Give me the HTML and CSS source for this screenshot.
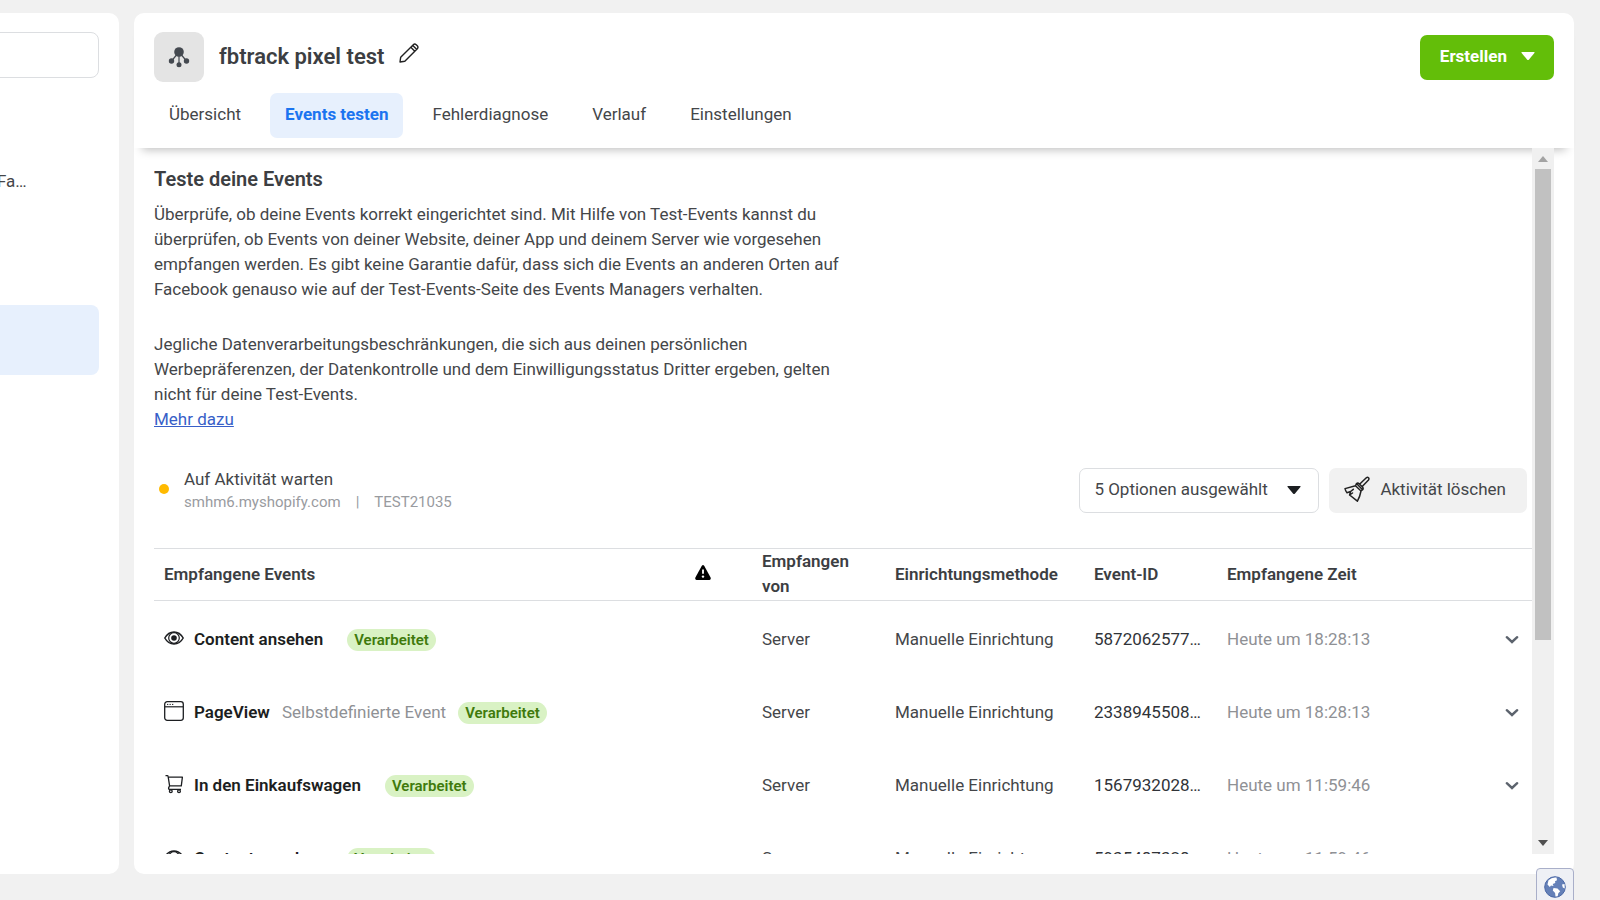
FILE: index.html
```html
<!DOCTYPE html>
<html lang="de">
<head>
<meta charset="utf-8">
<meta name="viewport" content="width=device-width, initial-scale=1">
<title>Events Manager</title>
<link rel="stylesheet" href="styles.css">
</head>
<body>
<svg class="sprite" aria-hidden="true">
  <symbol id="eye" viewBox="0 0 20 20"><path d="M.8 10C3 6 6.200 3.900 10 3.900S17 6 19.200 10C17 14 13.800 16.100 10 16.100S3 14 .8 10z" fill="none" stroke="currentColor" stroke-width="1.500"/><circle cx="10" cy="10" r="5.300" fill="none" stroke="currentColor" stroke-width="1.200"/><circle cx="10" cy="10" r="2.800" fill="currentColor"/></symbol>
  <symbol id="window" viewBox="0 0 20 20"><rect x=".7" y=".7" width="18.600" height="18.600" rx="2.500" fill="none" stroke="currentColor" stroke-width="1.300"/><path d="M1 5.800h18" stroke="currentColor" stroke-width="1.200"/><path d="M3 3.400h1.300M5.500 3.400h1.300M8 3.400h1.300" stroke="currentColor" stroke-width="1"/></symbol>
  <symbol id="cart" viewBox="0 0 20 20"><path d="M1.500 1.600H3.200Q4 1.600 4.100 2.400L5.600 11.800M3.800 3.200H18.400L17.300 11.800H5.600L4.600 13.900Q4.400 15.400 5.800 15.400H17" fill="none" stroke="currentColor" stroke-width="1.300" stroke-linejoin="round"/><circle cx="6.800" cy="17.200" r="1.400" fill="none" stroke="currentColor" stroke-width="1.300"/><circle cx="15" cy="17.200" r="1.400" fill="none" stroke="currentColor" stroke-width="1.300"/></symbol>
  <symbol id="chevron" viewBox="0 0 14 10"><path d="M1.800 2.200 7 7l5.200-4.800" fill="none" stroke="currentColor" stroke-width="2.400" stroke-linecap="round"/></symbol>
  <symbol id="caret" viewBox="0 0 14 8"><path d="M1 0h12q1 0 .4.900L8 7.400q-1 1-2 0L.6.900Q0 0 1 0z" fill="currentColor"/></symbol>
</svg>
<div class="app">
  <aside class="sidebar">
    <input class="side-search" type="text" aria-label="Suchen">
    <div class="side-label">Fa…</div>
    <a class="side-item" href="#" aria-label="Datenquelle"></a>
  </aside>
  <main class="panel">
    <header class="head">
      <div class="title-row">
        <div class="source-icon">
          <svg width="22" height="22" viewBox="0 0 22 22" fill="#444950" stroke="#444950"><path d="M11 6 3.500 15M11 6v13M11 6l7.500 9" stroke-width="1.200"/><circle cx="11" cy="6" r="4.800" stroke="none"/><circle cx="3.500" cy="15" r="2.700" stroke="none"/><circle cx="11" cy="18.700" r="2.500" stroke="none"/><circle cx="18.500" cy="15" r="2.700" stroke="none"/></svg>
        </div>
        <h1 class="title">fbtrack pixel test</h1>
        <button class="edit" aria-label="Bearbeiten"><svg width="20" height="20" viewBox="0 0 20 20" fill="none" stroke="#222" stroke-width="1.400" stroke-linejoin="round"><path d="M1 19 1.700 14.200 14.300 1.700Q15.700.4 17.200 1.700L18.300 2.800Q19.600 4.300 18.300 5.700L5.800 18.300zM11.800 4.200l4 4M13.800 2.400l3.800 3.800"/></svg></button>
        <button class="create">Erstellen <svg width="14" height="8"><use href="#caret"/></svg></button>
      </div>
      <nav class="tabs">
        <a class="tab" href="#">Übersicht</a>
        <a class="tab active" href="#" aria-current="page">Events testen</a>
        <a class="tab" href="#">Fehlerdiagnose</a>
        <a class="tab" href="#">Verlauf</a>
        <a class="tab" href="#">Einstellungen</a>
      </nav>
    </header>
    <div class="body">
      <div class="content">
        <section class="intro">
          <h2 class="heading">Teste deine Events</h2>
          <p class="text">Überprüfe, ob deine Events korrekt eingerichtet sind. Mit Hilfe von Test-Events kannst du<br>überprüfen, ob Events von deiner Website, deiner App und deinem Server wie vorgesehen<br>empfangen werden. Es gibt keine Garantie dafür, dass sich die Events an anderen Orten auf<br>Facebook genauso wie auf der Test-Events-Seite des Events Managers verhalten.</p>
          <p class="text">Jegliche Datenverarbeitungsbeschränkungen, die sich aus deinen persönlichen<br>Werbepräferenzen, der Datenkontrolle und dem Einwilligungsstatus Dritter ergeben, gelten<br>nicht für deine Test-Events.<br><a class="more" href="#">Mehr dazu</a></p>
        </section>
        <section class="status">
          <span class="dot"></span>
          <div class="state">
            <div>Auf Aktivität warten</div>
            <div class="meta"><span>smhm6.myshopify.com</span><span>|</span><span>TEST21035</span></div>
          </div>
          <div class="picker">
            <select class="select" aria-label="Optionen"><option>5 Optionen ausgewählt</option></select>
            <svg class="picker-caret" width="14" height="8"><use href="#caret"/></svg>
          </div>
          <button class="clear"><svg width="26" height="26" viewBox="0 0 26 26" fill="none" stroke="#222" stroke-width="1.500" stroke-linejoin="round" stroke-linecap="round"><path d="M15.800 8 22.300 1.800Q23.500.9 24.500 1.800 25.400 2.800 24.500 4L18.200 10.500M12.500 7.500Q13.800 6.400 15.200 7.700L18.500 11Q19.700 12.400 18.600 13.700zM12.500 7.500 11.500 9.800 17 15 18.600 13.700M11.500 9.800 1 12.600Q1.600 15 3 16.800L6.600 15.500 5.600 19 13.400 25.200Q16 20.500 17 15M6.600 15.500 9.300 13.300M5.600 19 8.500 17"/></svg>Aktivität löschen</button>
        </section>
        <table class="events">
          <colgroup><col><col class="c-warn"><col class="c-from"><col class="c-method"><col class="c-id"><col class="c-time"><col class="c-open"></colgroup>
          <thead>
            <tr><th>Empfangene Events</th><th><svg class="warn" width="16" height="15" viewBox="0 0 16 15" role="img" aria-label="Warnungen"><path d="M6.700.9q1.300-1.600 2.600 0L15.600 12.500Q16.200 14.600 14.500 15h-13Q-.2 14.600.4 12.500z" fill="#000"/><path d="M8 4.500v4.300" stroke="#fff" stroke-width="1.800"/><circle cx="8" cy="11.600" r="1.200" fill="#fff"/></svg></th><th>Empfangen von</th><th>Einrichtungsmethode</th><th>Event-ID</th><th>Empfangene Zeit</th><th></th></tr>
          </thead>
          <tbody>
            <tr><td><div class="event"><svg width="20" height="20"><use href="#eye"/></svg><b class="name spaced">Content ansehen</b><span class="badge">Verarbeitet</span></div></td><td></td><td>Server</td><td>Manuelle Einrichtung</td><td class="id">5872062577…</td><td class="time">Heute um 18:28:13</td><td><button class="open" aria-label="Details"><svg width="14" height="10"><use href="#chevron"/></svg></button></td></tr>
            <tr><td><div class="event"><svg width="20" height="20"><use href="#window"/></svg><b class="name">PageView</b><span class="kind">Selbstdefinierte Event</span><span class="badge">Verarbeitet</span></div></td><td></td><td>Server</td><td>Manuelle Einrichtung</td><td class="id">2338945508…</td><td class="time">Heute um 18:28:13</td><td><button class="open" aria-label="Details"><svg width="14" height="10"><use href="#chevron"/></svg></button></td></tr>
            <tr><td><div class="event"><svg width="20" height="20"><use href="#cart"/></svg><b class="name spaced">In den Einkaufswagen</b><span class="badge">Verarbeitet</span></div></td><td></td><td>Server</td><td>Manuelle Einrichtung</td><td class="id">1567932028…</td><td class="time">Heute um 11:59:46</td><td><button class="open" aria-label="Details"><svg width="14" height="10"><use href="#chevron"/></svg></button></td></tr>
            <tr><td><div class="event"><svg width="20" height="20"><use href="#eye"/></svg><b class="name spaced">Content ansehen</b><span class="badge">Verarbeitet</span></div></td><td></td><td>Server</td><td>Manuelle Einrichtung</td><td class="id">5935487328…</td><td class="time">Heute um 11:59:46</td><td><button class="open" aria-label="Details"><svg width="14" height="10"><use href="#chevron"/></svg></button></td></tr>
          </tbody>
        </table>
      </div>
      <div class="scrollbar" aria-hidden="true">
        <svg class="arrow" width="10" height="6" viewBox="0 0 10 6"><path d="M0 6 5 0l5 6z" fill="#a3a3a3"/></svg>
        <div class="track"><div class="thumb"></div></div>
        <svg class="arrow" width="10" height="6" viewBox="0 0 10 6"><path d="M0 0h10L5 6z" fill="#505050"/></svg>
      </div>
    </div>
  </main>
  <button class="globe" aria-label="Sprache"><svg width="22" height="22" viewBox="0 0 22 22"><circle cx="11" cy="11" r="10.300" fill="#6480b8" stroke="#4b68a6" stroke-width="1"/><path d="M4.500 4.200Q8 1 12.500 1.600L13 4.200 11 5.300 11.300 7 8.700 8 9.500 10 7 9.500 5.800 11 3.500 8.500zM9.500 12l4 .5 2.700 2.700-1.900 2-.6 3-2.200.4-.4-3.600-2.300-2.600zM18 8.500l2.500-.5.300 4.500-2-1z" fill="#fff"/></svg></button>
</div>
</body>
</html>
```
FILE: styles.css
```css
* { box-sizing: border-box; }

body {
  margin: 0;
  background: #f1f1f1;
  color: #444649;
  font-family: Roboto, "Liberation Sans", sans-serif;
  font-size: 17px;
  line-height: 25px;
  overflow: hidden;
}

button, input, select { font: inherit; color: inherit; margin: 0; }
button { border: 0; padding: 0; background: none; cursor: pointer; }
h1, h2, p { margin: 0; }
a { color: inherit; text-decoration: none; }
svg { flex: none; display: block; }
.sprite { position: absolute; width: 0; height: 0; }

.app {
  position: relative;
  display: flex;
  gap: 15px;
  height: 100vh;
  padding: 13px 26px 26px 0;
}

.sidebar {
  flex: none;
  width: 159px;
  margin-left: -40px;
  padding: 19px 20px;
  background: #fff;
  border-radius: 10px;
}
.side-search {
  display: block;
  width: 100%;
  height: 46px;
  padding: 0 12px;
  border: 1px solid #dcdee1;
  border-radius: 8px;
  background: #fff;
}
.side-label { margin: 91px 0 111px; padding-left: 17px; }
.side-item { display: block; height: 70px; border-radius: 8px; background: #e7f0fd; }

.panel {
  flex: 1;
  min-width: 0;
  display: flex;
  flex-direction: column;
  padding-bottom: 20px;
  background: #fff;
  border-radius: 10px;
}
.head {
  flex: none;
  padding: 19px 20px 10px;
  border-radius: 10px 10px 0 0;
  box-shadow: 0 10px 10px -8px rgba(0, 0, 0, .25);
}
.title-row { display: flex; align-items: center; }
.source-icon {
  display: grid;
  place-items: center;
  width: 50px;
  height: 50px;
  border-radius: 9px;
  background: #e4e4e4;
}
.title { margin-left: 15px; font-size: 22px; font-weight: 600; line-height: 28px; color: #3c3e42; }
.edit { margin: 0 auto 8px 15px; }
.create {
  display: flex;
  align-items: center;
  gap: 14px;
  height: 45px;
  padding: 0 19px 2px 20px;
  border-radius: 7px;
  background: #63be09;
  color: #fff;
  font-weight: 700;
}
.tabs { display: flex; gap: 14px; margin-top: 11px; }
.tab { padding: 9px 15px 11px; border-radius: 7px; }
.tab.active { background: #e7f0fd; color: #1b74f0; font-weight: 700; }

.body { flex: 1; min-height: 0; display: flex; padding: 0 20px; }
.content { flex: 1; min-width: 0; overflow: hidden; padding-top: 19px; }
.intro { display: grid; }
.heading { font-size: 20px; font-weight: 600; line-height: 25px; color: #3c3e42; margin-bottom: 10px; }
.text + .text { margin-top: 30px; }
.more { color: #385fc8; text-decoration: underline; }

.status { display: flex; align-items: center; gap: 10px; margin: 35px 5px; }
.dot { width: 10px; height: 10px; margin-bottom: 2px; border-radius: 50%; background: #ffba00; }
.state { flex: 1; margin-left: 5px; }
.meta { display: flex; gap: 15px; font-size: 15px; line-height: 21px; color: #999b9f; }
.picker { position: relative; }
.select {
  appearance: none;
  height: 45px;
  padding: 0 50px 2px 14px;
  border: 1px solid #dcdee1;
  border-radius: 7px;
  background: #fff;
}
.picker-caret { position: absolute; right: 18px; top: 18px; color: #1c1e21; pointer-events: none; }
.clear {
  display: flex;
  align-items: center;
  gap: 10px;
  height: 45px;
  padding: 0 21px 2px 15px;
  border-radius: 7px;
  background: #f1f1f1;
}

.events { width: 100%; table-layout: fixed; border-collapse: collapse; border-top: 1px solid #dcdee1; }
.c-warn { width: 67px; }
.c-from { width: 133px; }
.c-method { width: 199px; }
.c-id { width: 133px; }
.c-time { width: 271px; }
.c-open { width: 44px; }
.events th { height: 51px; padding: 0 10px 1px; text-align: left; font-weight: 600; border-bottom: 1px solid #dcdee1; color: #3c3e42; }
.warn { margin-bottom: 3px; }
.events tbody::before { content: ""; display: block; height: 2px; }
.events td { height: 73px; padding: 0 10px; white-space: nowrap; }
.event { display: flex; align-items: center; gap: 10px; color: #1c1e21; }
.event svg { margin-bottom: 3px; }
.name { font-weight: 600; }
.spaced { margin-right: 14px; }
.kind { margin: 0 2px; color: #8f9195; }
.id { color: #303338; }
.time { color: #8f9195; }
.badge { padding: 0 7px; border-radius: 11px; background: #d9f2c4; color: #3f7a0c; font-size: 15px; line-height: 22px; font-weight: 600; }
.open { display: block; margin-left: 7px; color: #5c636d; }

.scrollbar { flex: none; width: 22px; display: flex; flex-direction: column; align-items: center; gap: 7px; padding: 8px 0; background: #f0f0f0; }
.track { flex: 1; width: 16px; }
.thumb { height: 71%; background: #c1c1c1; }

.globe {
  position: absolute;
  right: 26px;
  bottom: -6px;
  display: grid;
  place-items: center;
  width: 38px;
  height: 38px;
  border: 1px solid #a9afc9;
  border-radius: 4px;
  background: #eef0f5;
}
```
